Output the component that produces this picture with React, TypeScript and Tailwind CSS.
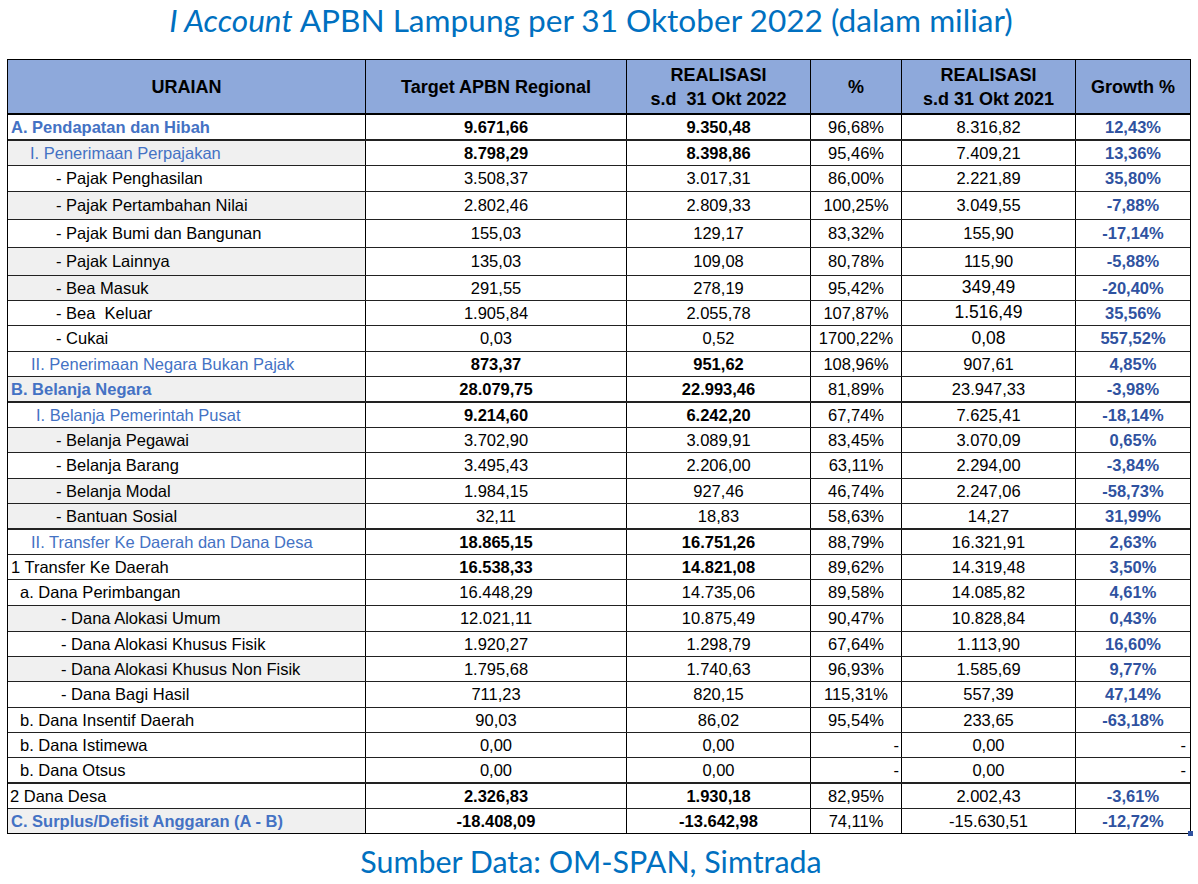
import React from "react";

type Row = {
  label: string;
  indent: string;
  kind: "head" | "sub" | "item";
  target: string;
  real22: string;
  pct: string;
  real21: string;
  growth: string;
  h: string;
  gray?: boolean;
  bold?: boolean;
  thick?: boolean;
  big21?: boolean;
};

const rows: Row[] = [
  { label: "A. Pendapatan dan Hibah", indent: "pl-[3px]", kind: "head", target: "9.671,66", real22: "9.350,48", pct: "96,68%", real21: "8.316,82", growth: "12,43%", h: "h-[26px]", bold: true, thick: true },
  { label: "I. Penerimaan Perpajakan", indent: "pl-[22px]", kind: "sub", target: "8.798,29", real22: "8.398,86", pct: "95,46%", real21: "7.409,21", growth: "13,36%", h: "h-[25px]", gray: true, bold: true },
  { label: "- Pajak Penghasilan", indent: "pl-[48px]", kind: "item", target: "3.508,37", real22: "3.017,31", pct: "86,00%", real21: "2.221,89", growth: "35,80%", h: "h-[26px]" },
  { label: "- Pajak Pertambahan Nilai", indent: "pl-[48px]", kind: "item", target: "2.802,46", real22: "2.809,33", pct: "100,25%", real21: "3.049,55", growth: "-7,88%", h: "h-[28px]", gray: true },
  { label: "- Pajak Bumi dan Bangunan", indent: "pl-[48px]", kind: "item", target: "155,03", real22: "129,17", pct: "83,32%", real21: "155,90", growth: "-17,14%", h: "h-[28px]" },
  { label: "- Pajak Lainnya", indent: "pl-[48px]", kind: "item", target: "135,03", real22: "109,08", pct: "80,78%", real21: "115,90", growth: "-5,88%", h: "h-[28px]", gray: true },
  { label: "- Bea Masuk", indent: "pl-[48px]", kind: "item", target: "291,55", real22: "278,19", pct: "95,42%", real21: "349,49", growth: "-20,40%", h: "h-[25px]", gray: true, big21: true },
  { label: "- Bea\u00a0 Keluar", indent: "pl-[48px]", kind: "item", target: "1.905,84", real22: "2.055,78", pct: "107,87%", real21: "1.516,49", growth: "35,56%", h: "h-[25px]", big21: true },
  { label: "- Cukai", indent: "pl-[48px]", kind: "item", target: "0,03", real22: "0,52", pct: "1700,22%", real21: "0,08", growth: "557,52%", h: "h-[26px]", big21: true },
  { label: "II. Penerimaan Negara Bukan Pajak", indent: "pl-[23px]", kind: "sub", target: "873,37", real22: "951,62", pct: "108,96%", real21: "907,61", growth: "4,85%", h: "h-[25px]", bold: true },
  { label: "B. Belanja Negara", indent: "pl-[3px]", kind: "head", target: "28.079,75", real22: "22.993,46", pct: "81,89%", real21: "23.947,33", growth: "-3,98%", h: "h-[26px]", gray: true, bold: true, thick: true },
  { label: "I. Belanja Pemerintah Pusat", indent: "pl-[28px]", kind: "sub", target: "9.214,60", real22: "6.242,20", pct: "67,74%", real21: "7.625,41", growth: "-18,14%", h: "h-[25px]", bold: true },
  { label: "- Belanja Pegawai", indent: "pl-[48px]", kind: "item", target: "3.702,90", real22: "3.089,91", pct: "83,45%", real21: "3.070,09", growth: "0,65%", h: "h-[25px]", gray: true },
  { label: "- Belanja Barang", indent: "pl-[48px]", kind: "item", target: "3.495,43", real22: "2.206,00", pct: "63,11%", real21: "2.294,00", growth: "-3,84%", h: "h-[26px]" },
  { label: "- Belanja Modal", indent: "pl-[48px]", kind: "item", target: "1.984,15", real22: "927,46", pct: "46,74%", real21: "2.247,06", growth: "-58,73%", h: "h-[25px]", gray: true },
  { label: "- Bantuan Sosial", indent: "pl-[48px]", kind: "item", target: "32,11", real22: "18,83", pct: "58,63%", real21: "14,27", growth: "31,99%", h: "h-[26px]", gray: true, thick: true },
  { label: "II. Transfer Ke Daerah dan Dana Desa", indent: "pl-[23px]", kind: "sub", target: "18.865,15", real22: "16.751,26", pct: "88,79%", real21: "16.321,91", growth: "2,63%", h: "h-[25px]", bold: true },
  { label: "1 Transfer Ke Daerah", indent: "pl-[3px]", kind: "item", target: "16.538,33", real22: "14.821,08", pct: "89,62%", real21: "14.319,48", growth: "3,50%", h: "h-[25px]", bold: true },
  { label: "a. Dana Perimbangan", indent: "pl-[12px]", kind: "item", target: "16.448,29", real22: "14.735,06", pct: "89,58%", real21: "14.085,82", growth: "4,61%", h: "h-[26px]" },
  { label: "- Dana Alokasi Umum", indent: "pl-[53px]", kind: "item", target: "12.021,11", real22: "10.875,49", pct: "90,47%", real21: "10.828,84", growth: "0,43%", h: "h-[26px]", gray: true },
  { label: "- Dana Alokasi Khusus Fisik", indent: "pl-[53px]", kind: "item", target: "1.920,27", real22: "1.298,79", pct: "67,64%", real21: "1.113,90", growth: "16,60%", h: "h-[25px]" },
  { label: "- Dana Alokasi Khusus Non Fisik", indent: "pl-[53px]", kind: "item", target: "1.795,68", real22: "1.740,63", pct: "96,93%", real21: "1.585,69", growth: "9,77%", h: "h-[25px]", gray: true },
  { label: "- Dana Bagi Hasil", indent: "pl-[53px]", kind: "item", target: "711,23", real22: "820,15", pct: "115,31%", real21: "557,39", growth: "47,14%", h: "h-[26px]" },
  { label: "b. Dana Insentif Daerah", indent: "pl-[12px]", kind: "item", target: "90,03", real22: "86,02", pct: "95,54%", real21: "233,65", growth: "-63,18%", h: "h-[25px]" },
  { label: "b. Dana Istimewa", indent: "pl-[12px]", kind: "item", target: "0,00", real22: "0,00", pct: "-", real21: "0,00", growth: "-", h: "h-[25px]" },
  { label: "b. Dana Otsus", indent: "pl-[12px]", kind: "item", target: "0,00", real22: "0,00", pct: "-", real21: "0,00", growth: "-", h: "h-[26px]", thick: true },
  { label: "2 Dana Desa", indent: "pl-[2px]", kind: "item", target: "2.326,83", real22: "1.930,18", pct: "82,95%", real21: "2.002,43", growth: "-3,61%", h: "h-[25px]", bold: true },
  { label: "C. Surplus/Defisit Anggaran (A - B)", indent: "pl-[3px]", kind: "head", target: "-18.408,09", real22: "-13.642,98", pct: "74,11%", real21: "-15.630,51", growth: "-12,72%", h: "h-[24px]", gray: true, bold: true },
];

const cols = "grid grid-cols-[358px_261px_184px_91px_174px_1fr]";

const labelTone = (k: Row["kind"]) =>
  k === "head"
    ? "text-[#4472C4] font-bold"
    : k === "sub"
    ? "text-[#4472C4]"
    : "text-black";

export default function App() {
  return (
    <div className="w-[1198px] h-[884px] bg-white font-['Liberation_Sans',Arial,sans-serif] text-[16.5px] text-black">
      <div className="h-[59px] pr-[16px] text-center font-['Lato',sans-serif] text-[31.6px] leading-[40px] text-[#0070C0]">
        <span className="italic">I Account</span> APBN Lampung per 31 Oktober 2022 (dalam miliar)
      </div>

      <div className="relative ml-[7px] w-[1184px] border border-black">
        <div className={`${cols} h-[55px] bg-[#8EA9DB] border-b-2 border-black text-[18px] font-bold leading-[24px]`}>
          <div className="flex items-center justify-center border-r border-black">URAIAN</div>
          <div className="flex items-center justify-center border-r border-black">Target APBN Regional</div>
          <div className="flex flex-col items-center justify-center border-r border-black">
            <span>REALISASI</span>
            <span>s.d&nbsp; 31 Okt 2022</span>
          </div>
          <div className="flex items-center justify-center border-r border-black">%</div>
          <div className="flex flex-col items-center justify-center border-r border-black">
            <span>REALISASI</span>
            <span>s.d 31 Okt 2021</span>
          </div>
          <div className="flex items-center justify-center">Growth %</div>
        </div>

        {rows.map((r, i) => (
          <div
            key={i}
            className={`${cols} ${r.h} ${i === rows.length - 1 ? "" : r.thick ? "border-b-2 border-[#222]" : "border-b border-[#222]"} leading-none`}
          >
            <div className={`flex items-center border-r border-black whitespace-pre ${r.indent} ${labelTone(r.kind)} ${r.gray ? "bg-[#F0F0F0]" : "bg-white"}`}>
              {r.label}
            </div>
            <div className={`flex items-center justify-center border-r border-black ${r.bold ? "font-bold" : ""}`}>{r.target}</div>
            <div className={`flex items-center justify-center border-r border-black ${r.bold ? "font-bold" : ""}`}>{r.real22}</div>
            <div className={`flex items-center border-r border-black ${r.pct === "-" ? "justify-end pr-[2px]" : "justify-center"}`}>{r.pct}</div>
            <div className={`flex items-center justify-center border-r border-black ${r.big21 ? "text-[17.5px]" : ""}`}>{r.real21}</div>
            <div className={`flex items-center font-bold text-[#2F52A0] ${r.growth === "-" ? "justify-end pr-[4px] font-normal text-black" : "justify-center"}`}>
              {r.growth}
            </div>
          </div>
        ))}
        <div className="absolute right-[-3px] bottom-[-3px] w-[5px] h-[5px] bg-[#2F52A0]" />
      </div>

      <div className="pr-[16px] text-center font-['Lato',sans-serif] text-[30.4px] leading-[54px] text-[#0070C0]">
        Sumber Data: OM-SPAN, Simtrada
      </div>
    </div>
  );
}
